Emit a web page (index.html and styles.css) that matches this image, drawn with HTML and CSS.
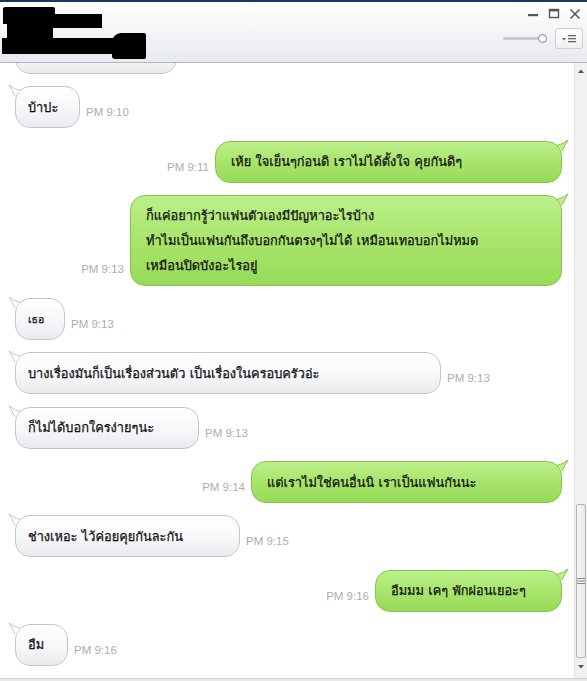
FILE: index.html
```html
<!DOCTYPE html>
<html>
<head>
<meta charset="utf-8">
<link rel="stylesheet" href="styles.css">
</head>
<body>
<div class="window">
  <header class="titlebar">
    <div class="redact">
      <span class="r r1"></span><span class="r r2"></span><span class="r r3"></span><span class="r r4"></span><span class="r r5"></span>
    </div>
    <div class="controls">
      <div class="winbtns">
        <svg width="12" height="12" viewBox="0 0 12 12"><rect x="1" y="6" width="10" height="2.2" fill="#555"/></svg>
        <svg width="12" height="12" viewBox="0 0 12 12"><rect x="1.5" y="1.5" width="9" height="8" fill="none" stroke="#555" stroke-width="1.4"/><rect x="1" y="1" width="10" height="2.4" fill="#555"/></svg>
        <svg width="12" height="12" viewBox="0 0 12 12"><path d="M1.5 1.5 L10.5 10.5 M10.5 1.5 L1.5 10.5" stroke="#555" stroke-width="1.5"/></svg>
      </div>
      <div class="tools">
        <div class="slider"><span class="track"></span><span class="thumb"></span></div>
        <div class="menubtn">
          <svg width="18" height="12" viewBox="0 0 18 12"><path d="M2 5 L6 5 L4 7.5Z" fill="#666"/><rect x="8" y="2" width="8" height="1.3" fill="#666"/><rect x="8" y="5" width="8" height="1.3" fill="#666"/><rect x="8" y="8" width="8" height="1.3" fill="#666"/></svg>
        </div>
      </div>
    </div>
  </header>
  <main class="chat">
    <div class="list">
      <div class="row in"><div class="bubble" style="width:162px"><span>&nbsp;</span></div></div>
      <div class="row in"><div class="bubble" style="width:65px"><svg class="tail" width="12" height="12" viewBox="0 0 12 12"><path d="M0 0 Q5 4 11 5.5 L 6 11 Q3 5 0 0Z" class="tf"/><path d="M11 5.5 Q5 4 0 0 Q3 5 6 11" class="ts"/></svg><span>บ้าปะ</span></div><span class="time">PM 9:10</span></div>
      <div class="row out"><span class="time">PM 9:11</span><div class="bubble" style="width:347px"><svg class="tail" width="12" height="12" viewBox="0 0 12 12"><path d="M12 0 Q7 4 1 5.5 L 6 11 Q9 5 12 0Z" class="tf"/><path d="M1 5.5 Q7 4 12 0 Q9 5 6 11" class="ts"/></svg><span>เห้ย ใจเย็นๆก่อนดิ เราไม่ได้ตั้งใจ คุยกันดิๆ</span></div></div>
      <div class="row out multi"><span class="time">PM 9:13</span><div class="bubble" style="width:432px"><svg class="tail" width="12" height="12" viewBox="0 0 12 12"><path d="M12 0 Q7 4 1 5.5 L 6 11 Q9 5 12 0Z" class="tf"/><path d="M1 5.5 Q7 4 12 0 Q9 5 6 11" class="ts"/></svg><span>ก็แค่อยากรู้ว่าแฟนตัวเองมีปัญหาอะไรบ้าง<br>ทำไมเป็นแฟนกันถึงบอกกันตรงๆไม่ได้ เหมือนเทอบอกไม่หมด<br>เหมือนปิดบังอะไรอยู่</span></div></div>
      <div class="row in"><div class="bubble" style="width:50px"><svg class="tail" width="12" height="12" viewBox="0 0 12 12"><path d="M0 0 Q5 4 11 5.5 L 6 11 Q3 5 0 0Z" class="tf"/><path d="M11 5.5 Q5 4 0 0 Q3 5 6 11" class="ts"/></svg><span class="small">เธอ</span></div><span class="time">PM 9:13</span></div>
      <div class="row in"><div class="bubble" style="width:426px"><svg class="tail" width="12" height="12" viewBox="0 0 12 12"><path d="M0 0 Q5 4 11 5.5 L 6 11 Q3 5 0 0Z" class="tf"/><path d="M11 5.5 Q5 4 0 0 Q3 5 6 11" class="ts"/></svg><span>บางเรื่องมันก็เป็นเรื่องส่วนตัว เป็นเรื่องในครอบครัวอ่ะ</span></div><span class="time">PM 9:13</span></div>
      <div class="row in"><div class="bubble" style="width:184px"><svg class="tail" width="12" height="12" viewBox="0 0 12 12"><path d="M0 0 Q5 4 11 5.5 L 6 11 Q3 5 0 0Z" class="tf"/><path d="M11 5.5 Q5 4 0 0 Q3 5 6 11" class="ts"/></svg><span>ก็ไม่ได้บอกใครง่ายๆนะ</span></div><span class="time">PM 9:13</span></div>
      <div class="row out"><span class="time">PM 9:14</span><div class="bubble" style="width:311px"><svg class="tail" width="12" height="12" viewBox="0 0 12 12"><path d="M12 0 Q7 4 1 5.5 L 6 11 Q9 5 12 0Z" class="tf"/><path d="M1 5.5 Q7 4 12 0 Q9 5 6 11" class="ts"/></svg><span>แต่เราไม่ใช่คนอื่นนิ เราเป็นแฟนกันนะ</span></div></div>
      <div class="row in"><div class="bubble" style="width:225px"><svg class="tail" width="12" height="12" viewBox="0 0 12 12"><path d="M0 0 Q5 4 11 5.5 L 6 11 Q3 5 0 0Z" class="tf"/><path d="M11 5.5 Q5 4 0 0 Q3 5 6 11" class="ts"/></svg><span>ช่างเหอะ ไว้ค่อยคุยกันละกัน</span></div><span class="time">PM 9:15</span></div>
      <div class="row out"><span class="time">PM 9:16</span><div class="bubble" style="width:187px"><svg class="tail" width="12" height="12" viewBox="0 0 12 12"><path d="M12 0 Q7 4 1 5.5 L 6 11 Q9 5 12 0Z" class="tf"/><path d="M1 5.5 Q7 4 12 0 Q9 5 6 11" class="ts"/></svg><span>อืมมม เคๆ พักผ่อนเยอะๆ</span></div></div>
      <div class="row in"><div class="bubble" style="width:53px"><svg class="tail" width="12" height="12" viewBox="0 0 12 12"><path d="M0 0 Q5 4 11 5.5 L 6 11 Q3 5 0 0Z" class="tf"/><path d="M11 5.5 Q5 4 0 0 Q3 5 6 11" class="ts"/></svg><span>อืม</span></div><span class="time">PM 9:16</span></div>
    </div>
    <div class="scrollbar">
      <svg class="arrow" width="8" height="6" viewBox="0 0 8 6"><path d="M1 5 L4 1.5 L7 5Z" fill="#555"/></svg>
      <div class="sb-track"><div class="sb-thumb"><svg width="8" height="8" viewBox="0 0 8 8"><rect x="0" y="1" width="8" height="1" fill="#888"/><rect x="0" y="3.5" width="8" height="1" fill="#888"/><rect x="0" y="6" width="8" height="1" fill="#888"/></svg></div></div>
      <svg class="arrow" width="8" height="6" viewBox="0 0 8 6"><path d="M1 1 L4 4.5 L7 1Z" fill="#555"/></svg>
    </div>
  </main>
  <footer class="bottom"></footer>
</div>
</body>
</html>
```
FILE: styles.css
```css
* { box-sizing: border-box; }
html, body { margin: 0; padding: 0; }
body {
  width: 587px;
  height: 681px;
  overflow: hidden;
  background: #fff;
  font-family: Tahoma, Loma, "Noto Sans Thai Looped", "Noto Sans Thai", "Liberation Sans", sans-serif;
}
.window {
  width: 587px;
  height: 681px;
  display: flex;
  flex-direction: column;
}
.titlebar {
  height: 63px;
  flex: none;
  border-top: 2px solid #1d3764;
  border-bottom: 1px solid #b4b8bd;
  background: linear-gradient(#ffffff, #f6f7f9 40%, #e6e9ed);
  display: flex;
  justify-content: space-between;
}
.redact {
  position: relative;
  width: 160px;
  height: 60px;
}
.r { position: absolute; background: #000; }
.r1 { left: 3px; top: 5px; width: 52px; height: 17px; border-radius: 2px 2px 0 0; }
.r2 { left: 50px; top: 12px; width: 52px; height: 14px; }
.r3 { left: 7px; top: 21px; width: 46px; height: 17px; }
.r4 { left: 2px; top: 36px; width: 144px; height: 16px; }
.r5 { left: 112px; top: 31px; width: 34px; height: 26px; border-radius: 9px 2px 2px 3px; }
.controls {
  display: flex;
  flex-direction: column;
  align-items: flex-end;
  padding: 6px 4px 0 0;
  gap: 8px;
}
.winbtns {
  display: flex;
  gap: 9px;
  padding-right: 2px;
}
.tools {
  display: flex;
  align-items: center;
  gap: 8px;
}
.slider {
  position: relative;
  width: 44px;
  height: 10px;
}
.track {
  position: absolute;
  left: 0; right: 6px; top: 3px;
  height: 3px;
  background: #c9ccd1;
  border-radius: 2px;
}
.thumb {
  position: absolute;
  right: 0; top: 0;
  width: 9px; height: 9px;
  border-radius: 50%;
  border: 1px solid #7f8488;
  background: #fff;
}
.menubtn {
  width: 28px;
  height: 21px;
  border: 1px solid #cdd0d4;
  border-radius: 3px;
  background: linear-gradient(#ffffff, #eef0f2);
  display: flex;
  align-items: center;
  justify-content: center;
}
.chat {
  flex: 1;
  display: flex;
  overflow: hidden;
  background: #fff;
}
.list {
  flex: 1;
  display: flex;
  flex-direction: column;
  gap: 12.3px;
  margin-top: -31px;
  padding: 0 12px 0 15px;
}
.row {
  display: flex;
  align-items: flex-end;
  gap: 6px;
  flex: none;
}
.row.out { justify-content: flex-end; }
.bubble {
  position: relative;
  flex: none;
  height: 42px;
  border-radius: 15px;
  padding: 0 12px;
  display: flex;
  align-items: center;
  font-size: 12.8px;
  color: #111;
  line-height: 25px;
  white-space: nowrap;
  -webkit-text-stroke: 0.25px #111;
}
.in .bubble {
  border: 1px solid #c3c7cc;
  background: linear-gradient(#ffffff, #f7f8fa 50%, #e9ebef);
}
.out .bubble {
  border: 1px solid #86c24d;
  background: linear-gradient(#bdef8a, #a8e56c 50%, #97da58);
  padding-left: 15px;
}
.multi .bubble { height: 91px; }
.small { font-size: 10.5px; }
.tail {
  position: absolute;
  top: -2px;
  overflow: visible;
}
.in .tail { left: -7px; }
.out .tail { right: -7px; }
.in .tf { fill: #ffffff; }
.out .tf { fill: #bdef8a; }
.ts { fill: none; stroke-width: 1; }
.in .ts { stroke: #c3c7cc; }
.out .ts { stroke: #86c24d; }
.time {
  font-family: "Liberation Sans", Arial, sans-serif;
  font-size: 11.5px;
  color: #adadad;
  margin-bottom: 10px;
  -webkit-text-stroke: 0;
}
.multi .time { margin-bottom: 11px; }
.scrollbar {
  width: 13px;
  flex: none;
  background: #f1f1f1;
  border-left: 1px solid #e6e6e6;
  display: flex;
  flex-direction: column;
  align-items: center;
  padding: 5px 0 8px;
}
.arrow { flex: none; }
.sb-track {
  flex: 1;
  width: 100%;
  display: flex;
  flex-direction: column;
  justify-content: flex-end;
  padding: 0 1px 6px;
}
.sb-thumb {
  height: 154px;
  border: 1px solid #b6b6b6;
  border-radius: 2px;
  background: linear-gradient(90deg, #f6f6f6, #e8e8e8);
  display: flex;
  align-items: center;
  justify-content: center;
}
.bottom {
  height: 3px;
  flex: none;
  background: #e8e8e8;
  border-top: 1px solid #d0d0d0;
}
```
